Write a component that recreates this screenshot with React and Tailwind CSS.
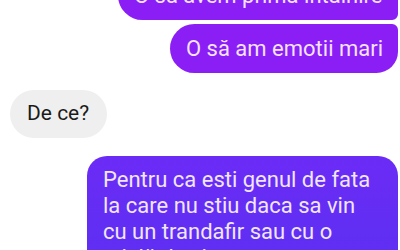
export default function App() {
  return (
    <div className="w-[400px] h-[250px] overflow-hidden bg-white font-['Roboto',sans-serif]">
      <div className="flex flex-col mt-[-29px]">
        <div className="self-end mr-[2px] w-[280px] h-[49px] pl-[16px] flex items-center bg-[#8a1ef5] text-[#f4e2ff] text-[22px] rounded-l-[25px] rounded-tr-[20px] rounded-br-[6px] whitespace-nowrap">
          O să avem prima întâlnire
        </div>
        <div className="self-end mt-[4px] mr-[2px] h-[49px] pl-[16px] pr-[15px] flex items-center bg-[#8a1ef5] text-[#f4e2ff] text-[22px] rounded-l-[25px] rounded-tr-[6px] rounded-br-[22px] whitespace-nowrap">
          O să am emotii mari
        </div>
        <div className="self-start mt-[17px] ml-[10px] w-[97px] h-[48px] pl-[17px] flex items-center bg-[#efefef] text-[#1a1a1a] text-[21px] rounded-[24px] whitespace-nowrap">
          De ce?
        </div>
        <div className="self-start mt-[18px] ml-[87px] w-[311px] pt-[11px] pb-[14px] px-[16px] bg-linear-to-b from-[#6b2bf6] to-[#5a30f1] text-[#f1e6ff] text-[22px] rounded-[20px] leading-[26px] whitespace-nowrap">
          Pentru ca esti genul de fata
          <br />
          la care nu stiu daca sa vin
          <br />
          cu un trandafir sau cu o
          <br />
          sticlă de vin
        </div>
      </div>
    </div>
  );
}
